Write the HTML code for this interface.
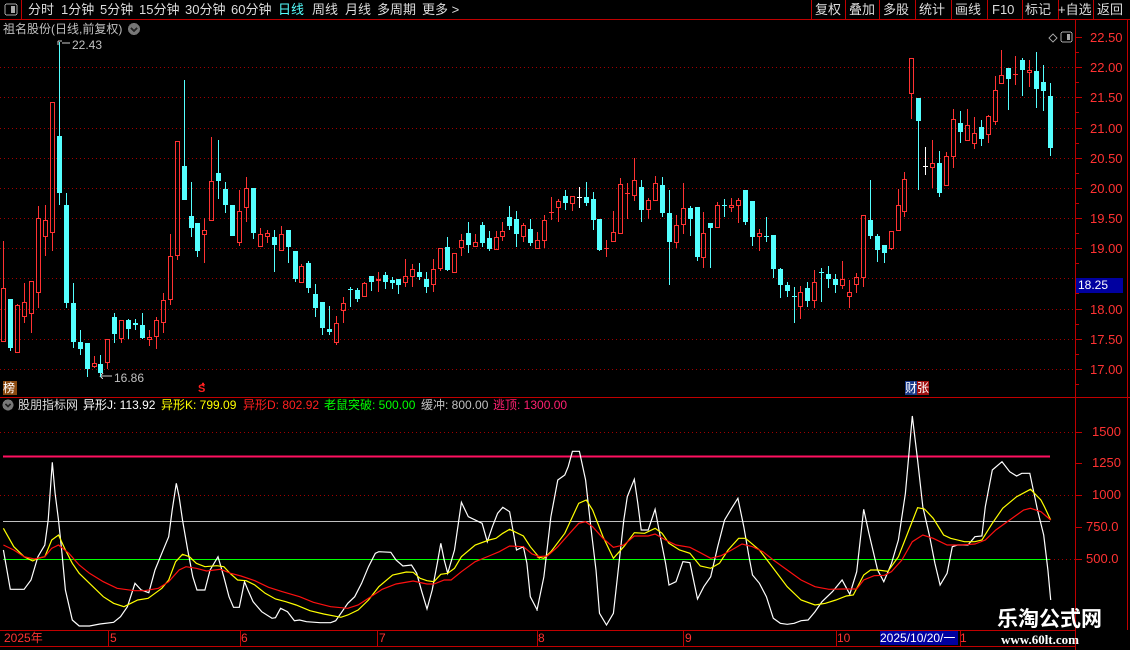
<!DOCTYPE html>
<html><head><meta charset="utf-8">
<style>
html,body{margin:0;padding:0;background:#000;}
body{width:1130px;height:650px;overflow:hidden;position:relative;font-family:"Liberation Sans","Noto Sans CJK SC",sans-serif;}
.t{position:absolute;white-space:nowrap;font-size:13px;line-height:15px;}
svg{position:absolute;left:0;top:0;}
</style></head><body>
<svg id="s" width="1130" height="650" xmlns="http://www.w3.org/2000/svg" shape-rendering="crispEdges"></svg>

<div class="t" style="left:28px;top:2px;color:#ddd;">分时</div>
<div class="t" style="left:61px;top:2px;color:#ddd;">1分钟</div>
<div class="t" style="left:100px;top:2px;color:#ddd;">5分钟</div>
<div class="t" style="left:139px;top:2px;color:#ddd;">15分钟</div>
<div class="t" style="left:185px;top:2px;color:#ddd;">30分钟</div>
<div class="t" style="left:231px;top:2px;color:#ddd;">60分钟</div>
<div class="t" style="left:278px;top:2px;color:#54ffff;">日线</div>
<div class="t" style="left:312px;top:2px;color:#ddd;">周线</div>
<div class="t" style="left:345px;top:2px;color:#ddd;">月线</div>
<div class="t" style="left:377px;top:2px;color:#ddd;">多周期</div>
<div class="t" style="left:422px;top:2px;color:#ddd;">更多 &gt;</div>

<div class="t" style="left:815px;top:2px;color:#ddd;">复权</div>
<div class="t" style="left:849px;top:2px;color:#ddd;">叠加</div>
<div class="t" style="left:883px;top:2px;color:#ddd;">多股</div>
<div class="t" style="left:919px;top:2px;color:#ddd;">统计</div>
<div class="t" style="left:955px;top:2px;color:#ddd;">画线</div>
<div class="t" style="left:992px;top:2px;color:#ddd;">F10</div>
<div class="t" style="left:1025px;top:2px;color:#ddd;">标记</div>
<div class="t" style="left:1058px;top:2px;color:#ddd;">+自选</div>
<div class="t" style="left:1097px;top:2px;color:#ddd;">返回</div>

<div class="t" style="left:3px;top:22px;color:#c0c0c0;font-size:12px;">祖名股份(日线,前复权)</div>
<div class="t" style="left:72px;top:38px;color:#c0c0c0;font-size:12px;">22.43</div>
<div class="t" style="left:114px;top:371px;color:#c0c0c0;font-size:12px;">16.86</div>

<div class="t" style="left:3px;top:381px;width:14px;height:14px;background:#8b4a10;color:#fff;font-size:12px;line-height:14px;">榜</div>
<div class="t" style="left:198px;top:383px;color:#ff2020;font-size:11px;font-weight:bold;line-height:12px;">S</div>
<div class="t" style="left:905px;top:381px;height:14px;background:#1a3a8a;color:#fff;font-size:12px;line-height:14px;">财<span style="background:#a01010">张</span></div>

<div class="t" style="left:18px;top:398px;color:#ddd;font-size:12px;">股朋指标网</div>
<div class="t" style="left:83px;top:398px;color:#fff;font-size:12px;">异形J: 113.92</div>
<div class="t" style="left:161px;top:398px;color:#ffff00;font-size:12px;">异形K: 799.09</div>
<div class="t" style="left:243px;top:398px;color:#ff2020;font-size:12px;">异形D: 802.92</div>
<div class="t" style="left:324px;top:398px;color:#00ff00;font-size:12px;">老鼠突破: 500.00</div>
<div class="t" style="left:421px;top:398px;color:#c0c0c0;font-size:12px;">缓冲: 800.00</div>
<div class="t" style="left:493px;top:398px;color:#ff2070;font-size:12px;">逃顶: 1300.00</div>

<div id="ax"></div>
<div class="t" style="left:1076px;top:278px;width:47px;height:15px;background:#0000a0;color:#fff;font-size:12px;line-height:15px;padding-left:2px;box-sizing:border-box;">18.25</div>

<div class="t" style="left:4px;top:631px;color:#ff3232;font-size:12px;">2025年</div>
<div class="t" style="left:110px;top:631px;color:#ff3232;font-size:12px;">5</div>
<div class="t" style="left:241px;top:631px;color:#ff3232;font-size:12px;">6</div>
<div class="t" style="left:379px;top:631px;color:#ff3232;font-size:12px;">7</div>
<div class="t" style="left:538px;top:631px;color:#ff3232;font-size:12px;">8</div>
<div class="t" style="left:685px;top:631px;color:#ff3232;font-size:12px;">9</div>
<div class="t" style="left:837px;top:631px;color:#ff3232;font-size:12px;">10</div>
<div class="t" style="left:880px;top:631px;width:78px;height:14px;background:#0000a0;color:#fff;font-size:12px;line-height:14px;">2025/10/20/一</div>
<div class="t" style="left:960px;top:631px;color:#ff3232;font-size:12px;">1</div>

<div class="t" style="left:997px;top:608px;color:#fff;font-size:21px;line-height:24px;font-weight:bold;">乐淘公式网</div>
<div class="t" style="left:1001px;top:632px;color:#fff;font-size:13px;font-weight:bold;font-family:'Liberation Serif',serif;">www.60lt.com</div>

<script>
var S=document.getElementById('s'),h='';
function L(x1,y1,x2,y2,c,w,d){h+='<line x1="'+x1+'" y1="'+y1+'" x2="'+x2+'" y2="'+y2+'" stroke="'+c+'" stroke-width="'+(w||1)+'"'+(d?' stroke-dasharray="'+d+'"':'')+'/>';}
L(0,19.5,1130,19.5,'#c00000');L(21.5,0,21.5,19,'#c00000');
h+='<rect x="5" y="4" width="12" height="11" rx="2" fill="none" stroke="#aaa"/><rect x="11" y="6" width="4" height="7" fill="#aaa"/>';
[811,845,879,915,951,987,1022,1058,1093].forEach(function(x){L(x+.5,0,x+.5,19,'#c00000');});
L(1075.5,19,1075.5,650,'#c00000');L(1127.5,19,1127.5,630,'#c00000');
L(0,397.5,1130,397.5,'#c00000');L(0,630.5,1075,630.5,'#c00000');L(0,646.5,1075,646.5,'#c00000');
[108,240,377,537,683,836,960].forEach(function(x){L(x+.5,630,x+.5,646,'#c00000');});
var ax='';
for(var p=22.5;p>=16.99;p-=0.5){var y=Math.round(37+(22.5-p)*60.36)+.5;
 if(p<22.4)L(0,y,1075,y,'#a00000',1,'1 3');
 L(1075,y,1082,y,'#c00000');
 if(Math.abs(p-18.5)>0.1)ax+='<div class="t" style="left:1090px;top:'+(y-8)+'px;color:#ff3232;">'+p.toFixed(2)+'</div>';
 L(1075,y+15,1079,y+15,'#c00000');}
[[1500,432,'1500'],[1250,463,'1250'],[1000,495,'1000'],[750,527,'750.0'],[500,559,'500.0']].forEach(function(a){
 ax+='<div class="t" style="left:'+(a[2].length==4?1092:1086)+'px;top:'+(a[1]-8)+'px;color:#ff3232;">'+a[2]+'</div>';
 L(1075,a[1]+.5,1082,a[1]+.5,'#c00000');});
L(0,432.5,1075,432.5,'#a00000',1,'1 3');L(0,495.5,1075,495.5,'#a00000',1,'1 3');L(1050,559.5,1075,559.5,'#a00000',1,'1 3');
document.getElementById('ax').innerHTML=ax;
L(3,456.5,1050,456.5,'#ff1060',2);L(3,521.5,1050,521.5,'#c0c0c0');L(3,559.5,1050,559.5,'#00ff00');
h+='<circle cx="134" cy="29" r="6" fill="#777"/><path d="M131 28l3 3 3-3" stroke="#222" fill="none" stroke-width="1.5"/>';
h+='<circle cx="8" cy="405" r="5.5" fill="#777"/><path d="M5.5 404l2.5 2.5 2.5-2.5" stroke="#222" fill="none" stroke-width="1.5"/>';
h+='<path d="M1049 38l4-4 4 4-4 4z" fill="none" stroke="#999"/><rect x="1061" y="32" width="11" height="10" rx="2" fill="none" stroke="#aaa"/><rect x="1067" y="34" width="3" height="6" fill="#aaa"/>';
h+='<path d="M58 41v4M58 41l4 0M62 43h8" stroke="#ccc" fill="none"/><path d="M100 376l3 -3M100 376l3 3M100 376h12" stroke="#ccc" fill="none"/>';
h+='<path d="M201 385l2-3 2 3z" fill="#ff2020"/>';
var C=[
['r',775,935,632,935],['c',808,953,808,962],['r',826,970,822,970],['r',817,860,760,878],['r',754,853,754,910],['r',565,790,528,833],['r',571,620,525,677],['r',217,610,217,662],['c',318,488,35,525],['c',525,818,490,833],
['c',820,935,760,953],['c',936,957,900,976],['c',938,1016,938,1040],['r',1000,1010,978,1013],['c',1002,1030,975,1040],['r',928,1000,928,1016],['c',862,912,850,938],['r',871,928,871,938],['c',870,896,866,926],['c',878,884,866,900],
['c',885,924,850,928],['r',922,930,900,947],['r',871,922,862,956],['r',810,880,790,910],['r',679,810,612,825],['r',334,677,334,690],['c',408,509,150,509],['c',558,593,456,620],['c',580,662,580,680],['r',601,616,565,698],
['r',454,572,322,572],['c',430,452,330,506],['c',478,524,456,548],['c',525,617,525,617],['r',543,640,480,647],['r',475,535,441,575],['c',474,608,474,626],['r',613,650,595,650],['r',610,620,600,638],['c',621,646,600,725],
['r',613,664,588,664],['c',600,650,600,698],['c',663,746,663,755],['r',708,760,702,760],['c',699,773,692,788],['c',792,835,762,862],['c',816,895,816,914],['c',897,905,828,914],['r',880,938,858,944],['r',820,842,800,878],
['c',777,779,772,832],['c',781,806,773,815],['r',760,802,755,802],['c',738,755,738,782],['r',748,754,727,785],['c',736,755,726,778],['c',750,758,742,776],['c',748,764,748,792],['r',739,758,688,770],['r',718,742,702,770],
['c',726,740,700,750],['c',747,770,727,788],['r',718,766,686,785],['r',655,716,655,722],['c',652,720,622,722],['r',670,728,670,728],['r',631,655,612,677],['c',610,644,577,670],['r',637,650,612,650],['c',586,639,576,650],
['c',625,658,604,664],['r',620,660,604,660],['r',604,620,577,632],['c',562,587,528,600],['c',568,611,544,650],['r',586,620,580,636],['c',598,638,567,648],['r',631,656,606,656],
['r',571,632,555,654],['r',546,550,502,570],['r',514,533,507,575],['c',498,518,480,540],['r',498,523,498,543],['w',501,503,471,533],['c',502,518,457,528],['c',507,570,487,600],['c',567,660,567,663],['r',654,656,630,680],
['r',607,637,543,637],['r',463,611,444,611],['r',490,493,460,567],['r',451,499,384,512],['c',472,539,450,575],['r',511,541,505,566],['r',460,512,437,512],['c',465,548,441,560],['c',549,635,480,765],['r',586,638,556,653],
['r',535,584,460,613],['c',534,566,527,617],['c',531,681,531,694],['r',610,683,546,715],['c',579,593,579,713],['r',526,593,515,593],['c',525,528,507,560],['r',526,533,505,545],['r',511,527,503,580],['c',480,576,480,585],
['c',513,620,513,647],['r',609,622,598,662],['c',619,621,562,637],['c',615,716,615,745],['c',717,765,714,805],['c',765,782,757,802],['c',799,801,770,878],['r',785,830,768,866],['c',774,812,757,830],['r',757,814,720,833],
['c',726,728,714,815],['c',732,746,708,773],['c',746,764,733,788],['r',746,767,693,776],['r',787,800,750,834],['r',741,766,729,790],['r',556,743,556,770],['c',570,618,450,628],['c',618,660,612,695],['c',645,668,645,698],
['r',604,656,604,661],['r',525,602,477,602],['r',448,545,426,560],['r',85,193,85,266],['c',205,272,205,480],['w',409,411,350,435],['r',400,413,330,473],['c',400,488,363,500],['r',379,467,367,467],['r',268,380,237,413],
['c',280,305,242,340],['r',286,334,237,334],['r',310,343,262,358],['c',292,326,270,348],['r',258,316,255,340],['r',181,275,138,284],['r',136,163,60,163],['c',115,146,115,240],['r',132,135,78,165],['c',90,119,84,197],
['r',121,130,90,170],['c',124,176,66,233],['c',157,182,105,242],['c',198,353,160,378]];
var n=C.length,st=(1050-3.4)/(n-1);
C.forEach(function(c,i){var x=Math.round(3.4+i*st),Y=function(z){return Math.round(z/3+30);};
 var t=Y(c[1]),b=Y(c[2]),hi=Y(c[3]),lo=Y(c[4]);
 var col=c[0]=='r'?'#ff3232':(c[0]=='w'?'#ffffff':'#54ffff');
 if(hi<t)L(x+.5,hi,x+.5,t,col);if(lo>b)L(x+.5,b,x+.5,lo,col);
 if(b-t<2){L(x-2,t+.5,x+3,t+.5,col);}
 else if(c[0]=='r')h+='<rect x="'+(x-1.5)+'" y="'+(t+.5)+'" width="4" height="'+(b-t-1)+'" fill="none" stroke="'+col+'"/>';
 else h+='<rect x="'+(x-2)+'" y="'+t+'" width="5" height="'+(b-t)+'" fill="'+col+'"/>';
});
function P(a,b,col){var s='';a.forEach(function(p,i){if(i%2==0)s+=(p/2.904).toFixed(1)+','+(410+a[i+1]/3).toFixed(1)+' ';});
 b.forEach(function(p,i){if(i%2==0)s+=(530+p/2.877).toFixed(1)+','+(410+b[i+1]/3).toFixed(1)+' ';});
 h+='<polyline points="'+s+'" fill="none" stroke="'+col+'" stroke-width="1.2" shape-rendering="auto"/>';}
P([10,420,30,538,70,538,90,510,110,440,130,405,140,330,152,157,160,250,170,330,180,430,190,540,210,630,230,648,260,648,290,642,330,637,350,620,370,590,392,520,410,540,432,548,450,480,470,430,490,380,500,300,512,220,520,260,530,330,545,420,560,500,572,540,595,540,610,480,633,440,650,500,665,560,678,592,695,592,710,515,720,540,735,575,760,605,790,625,800,623,815,595,835,605,855,632,870,630,890,635,930,638,960,638,975,632,990,610,1010,580,1030,560,1050,520,1070,470,1090,430,1100,425,1135,427,1150,450,1170,468,1195,465,1210,490,1225,545,1240,597,1255,540,1270,460,1280,400,1290,450,1300,490,1320,420,1340,277,1360,320,1400,340,1415,395,1430,350,1445,310,1460,292,1480,305,1500,420,1520,410,1530,460,1540,560,1560,600],
[20,600,40,500,60,320,80,210,100,195,110,170,122,124,142,124,160,210,175,350,190,480,200,610,220,645,240,610,255,470,270,330,280,260,300,208,310,280,320,360,340,360,360,298,375,380,390,460,400,525,420,515,440,455,460,458,482,567,500,530,520,500,540,410,560,330,580,295,598,265,615,350,630,440,640,495,660,520,680,560,700,625,720,640,740,643,760,640,780,632,800,630,820,605,840,575,870,545,898,510,920,553,940,485,960,298,975,370,1000,480,1018,515,1040,460,1060,390,1080,250,1100,18,1115,150,1130,290,1150,380,1165,460,1180,525,1200,490,1215,410,1230,405,1260,405,1280,380,1300,378,1310,290,1330,180,1358,155,1380,185,1400,198,1415,190,1438,190,1460,300,1478,375,1490,480,1498,570],'#ffffff');
P([10,355,40,410,70,440,95,453,110,445,130,440,150,390,170,375,190,420,210,460,230,490,260,520,300,560,330,580,360,590,380,580,400,570,430,565,450,550,470,535,490,510,510,455,530,433,550,440,570,460,595,470,630,467,650,470,670,492,690,510,715,512,740,525,770,550,800,567,830,575,860,585,900,602,940,612,990,622,1010,615,1040,600,1070,570,1100,530,1140,495,1180,486,1200,487,1220,505,1240,512,1260,515,1280,493,1300,490,1320,475,1340,440,1380,405,1420,390,1440,385,1460,370,1480,358,1520,378,1540,410,1568,445],
[20,440,40,445,60,425,100,370,140,280,162,270,180,300,210,380,240,445,270,410,300,368,330,370,360,355,380,370,400,400,430,420,460,430,490,468,520,475,545,460,570,420,600,385,620,385,660,420,700,475,740,530,780,570,820,585,850,580,880,570,910,558,930,555,960,495,980,480,1000,480,1030,484,1060,440,1090,360,1115,293,1135,297,1160,325,1190,375,1210,385,1250,395,1280,395,1300,390,1330,340,1360,295,1400,260,1440,238,1470,270,1480,290,1498,330],'#ffff00');
P([10,405,40,420,70,440,100,447,130,440,150,415,170,405,200,430,230,465,260,490,300,515,340,535,390,542,420,542,460,535,490,515,520,480,540,470,570,475,600,483,640,478,670,490,700,498,740,512,780,532,820,545,870,560,910,577,960,590,1010,595,1040,585,1070,565,1110,538,1150,522,1200,513,1240,522,1260,522,1290,510,1310,510,1340,485,1380,455,1420,438,1450,425,1480,408,1520,410,1545,432,1568,440],
[20,440,50,438,80,410,110,375,140,340,160,335,180,350,210,385,240,412,270,405,300,378,340,378,360,372,390,390,420,405,460,412,490,428,520,445,550,437,580,420,610,402,640,410,670,425,700,450,740,480,780,510,820,530,860,538,900,537,940,537,960,510,990,497,1020,496,1040,485,1070,450,1100,395,1130,375,1160,385,1200,405,1240,405,1280,402,1310,390,1340,360,1380,330,1420,300,1440,295,1470,305,1498,330],'#ff1010');
S.innerHTML=h;
</script>
</body></html>
